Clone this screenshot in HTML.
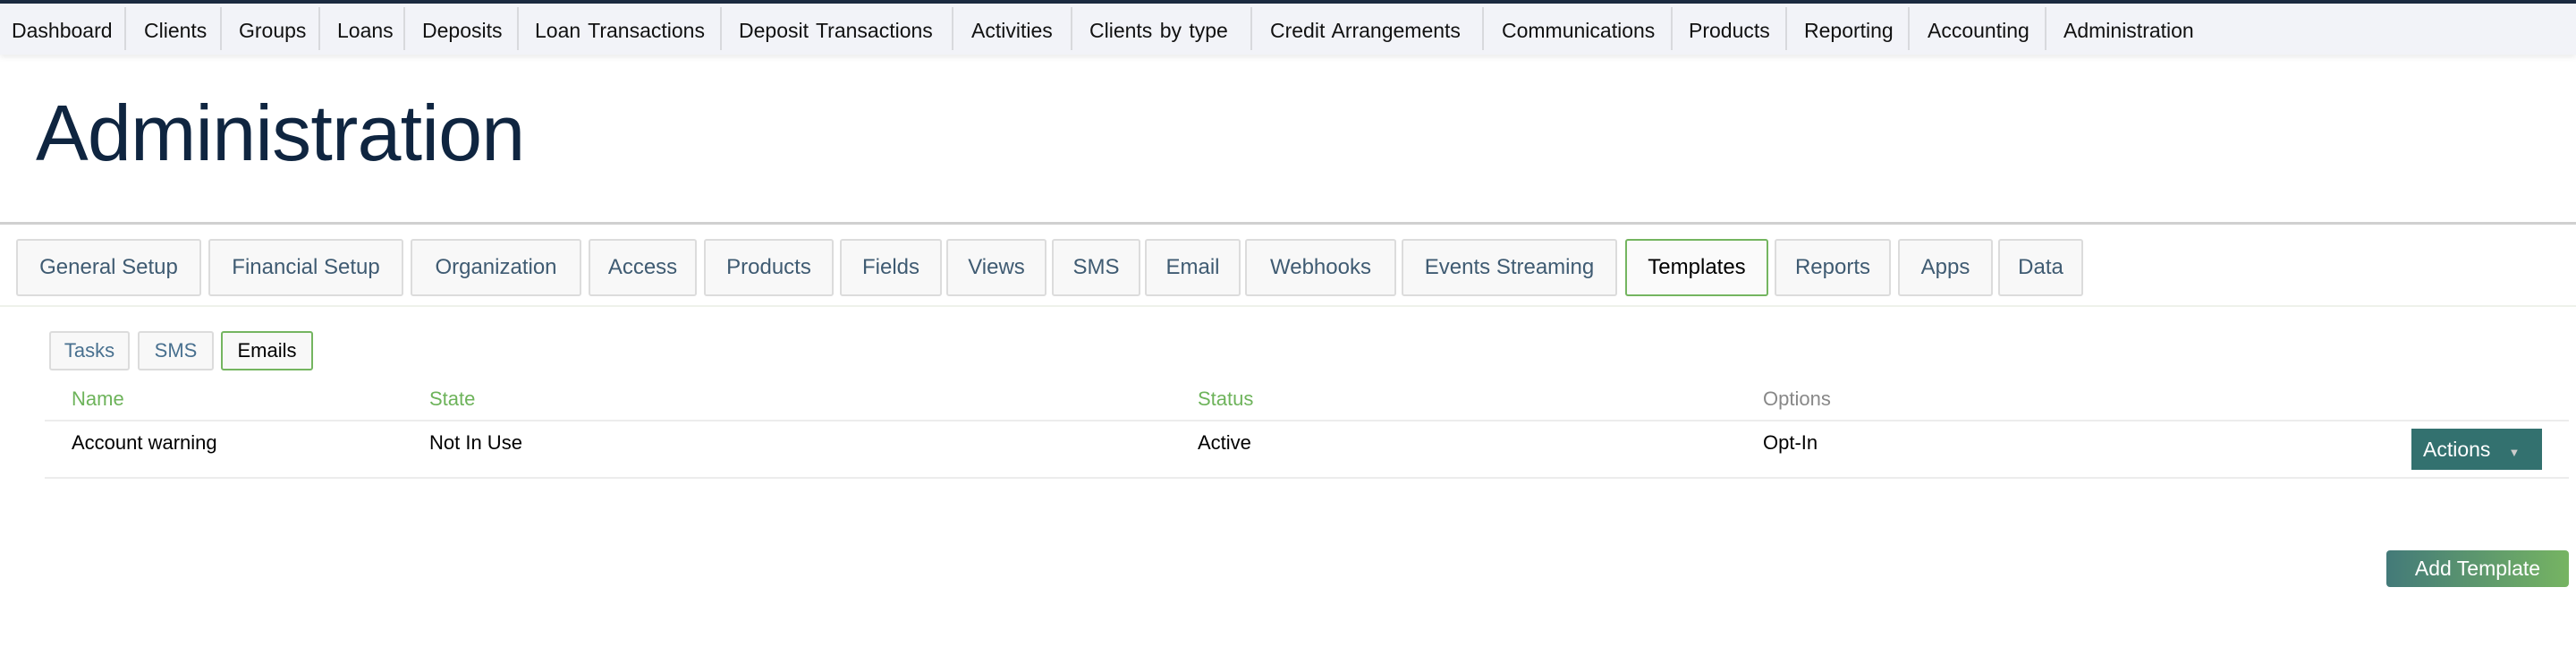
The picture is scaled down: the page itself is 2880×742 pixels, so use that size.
<!DOCTYPE html>
<html><head><meta charset="utf-8"><style>
*{margin:0;padding:0;box-sizing:border-box}
body{width:2880px;height:742px;background:#fff;font-family:"Liberation Sans",sans-serif;position:relative;overflow:hidden}
.top{position:absolute;left:0;top:0;width:2880px;height:4px;background:#1b2a40}
.nav{position:absolute;left:0;top:4px;width:2880px;height:57px;background:#f2f3f8;box-shadow:0 3px 6px rgba(0,0,0,.08)}
.ni{position:absolute;top:17px;font-size:23px;color:#111;white-space:nowrap;word-spacing:2px}
.sep{position:absolute;top:4px;width:2px;height:48px;background:#d8d9dd}
h1{position:absolute;left:40px;top:98px;font-size:88px;font-weight:normal;color:#0f2540;letter-spacing:-0.8px}
.hl{position:absolute;left:0;top:248px;width:2880px;height:3px;background:#d0d0d0}
.tab{position:absolute;top:267px;height:64px;background:#f8f8f8;border:2px solid #dcdcdc;border-radius:3px;color:#3f5b72;font-size:24px;display:flex;align-items:center;justify-content:center;white-space:nowrap}
.tab.act{border-color:#74b560;color:#000;background:#fafafa}
.hl2{position:absolute;left:0;top:341px;width:2880px;height:2px;background:#eef1ea}
.st{position:absolute;top:370px;height:44px;background:#f8f8f8;border:2px solid #dcdcdc;border-radius:3px;color:#48708f;font-size:22px;display:flex;align-items:center;justify-content:center}
.st.act{border-color:#74b560;color:#000}
.th{position:absolute;top:433px;font-size:22px;color:#6db35a}
.td{position:absolute;top:482px;font-size:22px;color:#000}
.ln{position:absolute;left:50px;width:2822px;height:2px;background:#ececec}
.btn{position:absolute;color:#fff;font-size:23px;display:flex;align-items:center;justify-content:center}
</style></head><body>
<div class="top"></div>
<div class="nav">
<span class="ni" style="left:13px">Dashboard</span><div class="sep" style="left:139px"></div>
<span class="ni" style="left:161px">Clients</span><div class="sep" style="left:246px"></div>
<span class="ni" style="left:267px">Groups</span><div class="sep" style="left:356px"></div>
<span class="ni" style="left:377px">Loans</span><div class="sep" style="left:451px"></div>
<span class="ni" style="left:472px">Deposits</span><div class="sep" style="left:578px"></div>
<span class="ni" style="left:598px">Loan Transactions</span><div class="sep" style="left:805px"></div>
<span class="ni" style="left:826px">Deposit Transactions</span><div class="sep" style="left:1064px"></div>
<span class="ni" style="left:1086px">Activities</span><div class="sep" style="left:1197px"></div>
<span class="ni" style="left:1218px">Clients by type</span><div class="sep" style="left:1398px"></div>
<span class="ni" style="left:1420px">Credit Arrangements</span><div class="sep" style="left:1657px"></div>
<span class="ni" style="left:1679px">Communications</span><div class="sep" style="left:1868px"></div>
<span class="ni" style="left:1888px">Products</span><div class="sep" style="left:1996px"></div>
<span class="ni" style="left:2017px">Reporting</span><div class="sep" style="left:2133px"></div>
<span class="ni" style="left:2155px">Accounting</span><div class="sep" style="left:2286px"></div>
<span class="ni" style="left:2307px">Administration</span>
</div>
<h1>Administration</h1>
<div class="hl"></div>
<div class="tab" style="left:18px;width:207px">General Setup</div>
<div class="tab" style="left:233px;width:218px">Financial Setup</div>
<div class="tab" style="left:459px;width:191px">Organization</div>
<div class="tab" style="left:658px;width:121px">Access</div>
<div class="tab" style="left:787px;width:145px">Products</div>
<div class="tab" style="left:939px;width:114px">Fields</div>
<div class="tab" style="left:1058px;width:112px">Views</div>
<div class="tab" style="left:1176px;width:99px">SMS</div>
<div class="tab" style="left:1280px;width:107px">Email</div>
<div class="tab" style="left:1392px;width:169px">Webhooks</div>
<div class="tab" style="left:1567px;width:241px">Events Streaming</div>
<div class="tab act" style="left:1817px;width:160px">Templates</div>
<div class="tab" style="left:1984px;width:130px">Reports</div>
<div class="tab" style="left:2122px;width:106px">Apps</div>
<div class="tab" style="left:2234px;width:95px">Data</div>
<div class="hl2"></div>
<div class="st" style="left:55px;width:90px">Tasks</div>
<div class="st" style="left:154px;width:85px">SMS</div>
<div class="st act" style="left:247px;width:103px">Emails</div>
<span class="th" style="left:80px">Name</span>
<span class="th" style="left:480px">State</span>
<span class="th" style="left:1339px">Status</span>
<span class="th" style="left:1971px;color:#888">Options</span>
<div class="ln" style="top:469px"></div>
<span class="td" style="left:80px">Account warning</span>
<span class="td" style="left:480px">Not In Use</span>
<span class="td" style="left:1339px">Active</span>
<span class="td" style="left:1971px">Opt-In</span>
<div class="btn" style="left:2696px;top:479px;width:146px;height:46px;background:#33716f;justify-content:flex-start;padding-left:13px">Actions<span style="font-size:13px;color:#ccc;margin-left:20px;margin-top:6px">&#9660;</span></div>
<div class="ln" style="top:533px"></div>
<div class="btn" style="left:2668px;top:615px;width:204px;height:41px;border-radius:4px;background:linear-gradient(90deg,#437a79,#76b462)">Add Template</div>
</body></html>
